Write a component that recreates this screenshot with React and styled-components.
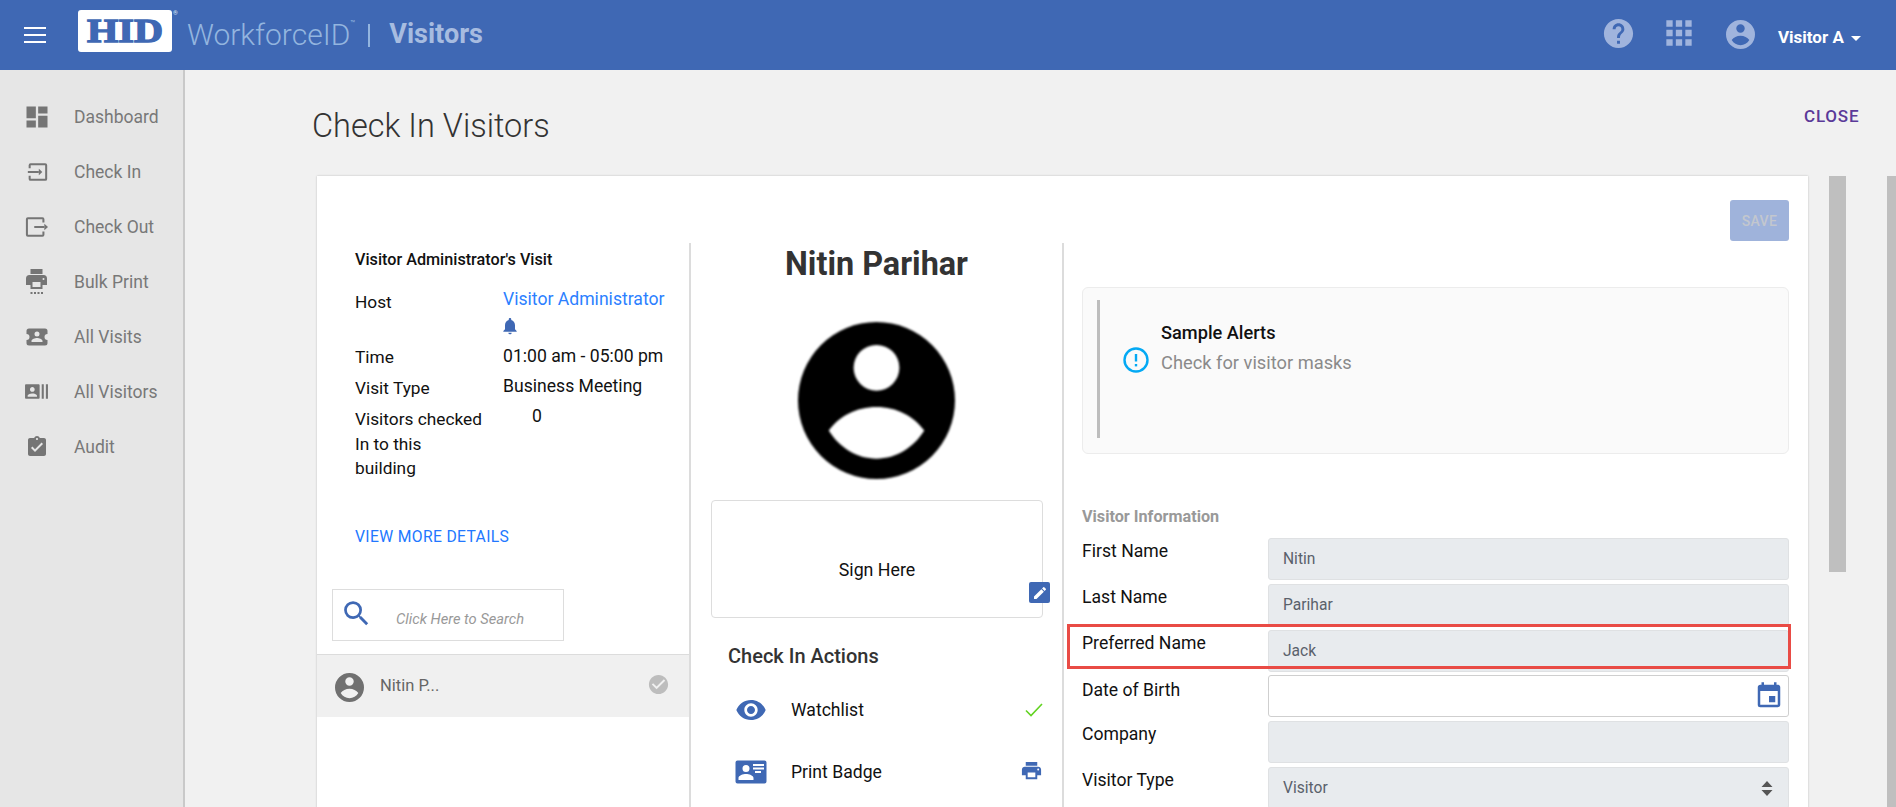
import React from "react";
import styled, { createGlobalStyle } from "styled-components";
import {
  MdDashboard, MdPrint, MdRecentActors, MdAssignmentTurnedIn, MdHelp, MdApps,
  MdVisibility, MdEvent, MdEdit, MdSearch, MdNotifications, MdCheckCircle,
} from "react-icons/md";

const Global = createGlobalStyle`
  html, body { margin: 0; padding: 0; height: 807px; overflow: hidden; background: #f1f1f1; }
  body { font-family: Roboto, "Liberation Sans", sans-serif; font-size: 17px; color: #111; }
  * { box-sizing: border-box; }
`;

const Shell = styled.div`width: 1896px; height: 807px; overflow: hidden; position: relative; background: #f1f1f1;`;

const TopBar = styled.header`height: 70px; background: #3f68b4; display: flex; align-items: center; position: relative;`;
const Burger = styled.div`width: 22px; height: 16px; margin-left: 24px; border-top: 2px solid #fff; border-bottom: 2px solid #fff; position: relative;
  &::after { content: ""; position: absolute; left: 0; right: 0; top: 5px; height: 2px; background: #fff; }`;
const LogoBox = styled.svg`margin-left: 32px; width: 102px; height: 46px; flex: none; align-self: flex-start; margin-top: 9px;`;
const Product = styled.span`margin-left: 7px; font-weight: 300; font-size: 30px; color: #93b5df; margin-top: -2px; position: relative;`;
const Tm = styled.sup`position: absolute; left: 100%; top: 3px; font-size: 8px; line-height: 1; font-weight: 400;`;
const Sep = styled.span`width: 2px; height: 23px; background: #93b5df; margin-left: 18px; margin-top: 0;`;
const AppName = styled.span`margin-left: 19px; font-weight: 700; font-size: 27px; color: #a7bce0; margin-top: -2px;`;
const TopRight = styled.div`margin-left: auto; display: flex; align-items: center; color: #a0b4dd; height: 100%; position: relative; width: 294px;`;
const TopIcon = styled.span`position: absolute; left: ${p => p.$x}px; top: ${p => p.$y}px; display: flex; line-height: 0;`;
const UserName = styled.span`position: absolute; left: 176px; top: 27px; line-height: 20px; color: #fff; font-weight: 700; font-size: 17px;`;
const Caret = styled.span`position: absolute; left: 249px; top: 36px; width: 0; height: 0; border-left: 5px solid transparent; border-right: 5px solid transparent; border-top: 5px solid #fff;`;

const Body = styled.div`display: flex; height: 737px;`;
const Sidebar = styled.nav`width: 185px; flex: none; height: 100%; background: #e6e6e6; border-right: 2px solid #c9c9c9; padding-top: 19px;`;
const NavRow = styled.div`height: 55px; display: flex; align-items: center; color: #787878; font-size: 17.5px;`;
const NavIcon = styled.span`width: 74px; flex: none; display: flex; justify-content: center; padding-right: 1px; color: #757575; line-height: 0;`;

const Main = styled.main`flex: 1; position: relative; min-width: 0;`;
const Title = styled.h1`position: absolute; left: 127px; top: 36px; margin: 0; font-weight: 300; font-size: 32.5px; line-height: 40px; color: #333;`;
const Close = styled.a`position: absolute; left: 1619px; top: 35px; line-height: 22px; font-size: 17px; font-weight: 500; color: #5b3a99; letter-spacing: .8px;`;
const ScrollThumb = styled.div`position: absolute; left: ${p => p.$x}px; width: ${p => p.$w}px; top: 106px; height: ${p => p.$h}px; background: #bfbfbf;`;

const Card = styled.section`position: absolute; left: 132px; top: 106px; width: 1491px; height: 700px; background: #fff; box-shadow: 0 0 2px rgba(0,0,0,.22);`;
const CardBar = styled.div`height: 67px; display: flex; justify-content: flex-end; padding: 24px 19px 0 0;`;
const Save = styled.button`width: 59px; height: 41px; border: 0; border-radius: 3px; background: #9fb3db; color: #c3c7ce; font: 500 14px Roboto, sans-serif; letter-spacing: .4px; padding: 0;`;
const Columns = styled.div`display: flex; height: 633px;`;

const LeftCol = styled.div`width: 374px; flex: none; border-right: 2px solid #dcdcdc;`;
const VisitInfo = styled.div`padding: 7px 0 0 38px;`;
const VisitTitle = styled.h3`margin: 0 0 17px; font-weight: 500; font-size: 16.2px; line-height: 20px; color: #111; white-space: nowrap;`;
const DetailRow = styled.div`display: grid; grid-template-columns: 148px 1fr; height: ${p => p.$h}px;`;
const DetailLabel = styled.span`font-size: 17.3px; line-height: 24.6px; margin-top: ${p => p.$t}px; width: 129px;`;
const DetailValue = styled.span`font-size: 17.6px; line-height: 24px; padding-left: ${p => p.$pad || 0}px;`;
const HostLink = styled.a`color: #2c7fff; display: block; white-space: nowrap;`;
const BellWrap = styled.span`display: block; color: #3f68b4; line-height: 0; margin: 5px 0 0 -3px;`;
const MoreLink = styled.a`display: block; margin: 45px 0 0 38px; color: #2277ff; font-size: 15.7px; line-height: 20px; letter-spacing: .35px;`;
const SearchBox = styled.div`margin: 42px 0 0 15px; width: 232px; height: 52px; border: 1.5px solid #ddd; display: flex; position: relative; color: #3f68b4;`;
const SearchIcon = styled.span`position: absolute; left: 7px; top: 7px; line-height: 0;`;
const Placeholder = styled.span`position: absolute; left: 63px; top: 17px; line-height: 24px; font-style: italic; font-size: 14.7px; color: #999;`;
const PersonRow = styled.div`margin-top: 13px; height: 63px; background: #f0f0f0; border-top: 1.5px solid #dcdcdc; display: flex; align-items: center; position: relative; color: #666;`;
const PersonAvatar = styled.span`margin-left: 18px; line-height: 0; color: #707070; margin-top: 2px;`;
const PersonName = styled.span`margin-left: 16px; font-size: 16.5px; margin-top: -2px;`;
const PersonCheck = styled.span`position: absolute; right: 19px; top: 18px; color: #bdbdbd; line-height: 0;`;

const MidCol = styled.div`width: 373px; flex: none; border-right: 2px solid #dcdcdc;`;
const Name = styled.h2`margin: 1px 0 -1px; height: 40px; text-align: center; font-weight: 700; font-size: 32.4px; line-height: 40px; color: #333;`;
const BigAvatar = styled.div`margin-top: 39px; height: 157px; display: flex; justify-content: center; filter: blur(1px); color: #000; line-height: 0; padding-right: 1px;`;
const SignBox = styled.div`margin: 21px 0 0 20px; width: 332px; height: 118px; border: 1.5px solid #ddd; border-radius: 4px; position: relative; display: flex; align-items: center; justify-content: center; font-size: 17.8px; padding-top: 20px;`;
const EditBtn = styled.span`position: absolute; right: -8px; bottom: 14px; width: 21px; height: 21px; border-radius: 2px; background: #3f68b4; color: #fff; display: flex; align-items: center; justify-content: center;`;
const ActionsTitle = styled.h3`margin: 26px 0 11px 37px; font-weight: 500; font-size: 20px; line-height: 24px; color: #333;`;
const ActionRow = styled.div`height: 62px; display: flex; align-items: center; position: relative; font-size: 17.6px;`;
const ActionIcon = styled.span`width: 100px; flex: none; display: flex; justify-content: center; padding-left: 19px; color: #3f68b4; line-height: 0;`;
const ActionEnd = styled.span`position: absolute; right: 19px; top: ${p => p.$t}px; color: ${p => p.$c}; line-height: 0;`;

const RightCol = styled.div`flex: 1; padding: 44px 0 0 18px;`;
const AlertBox = styled.div`width: 707px; height: 167px; background: #fafafa; border: 1px solid #ececec; border-radius: 6px; padding: 12px 14px; display: flex; position: relative;`;
const AlertBar = styled.span`width: 3px; height: 138px; background: #bdbdbd;`;
const AlertIcon = styled.span`position: absolute; left: 40px; top: 59px; line-height: 0;`;
const AlertText = styled.div`position: absolute; left: 78px; top: 33px;`;
const AlertTitle = styled.div`font-weight: 500; font-size: 18.2px; line-height: 24px; color: #111;`;
const AlertBody = styled.div`font-size: 18.3px; line-height: 24px; margin-top: 6px; color: #8a8a8a;`;
const SectionTitle = styled.h4`margin: 53px 0 11px; font-weight: 700; font-size: 16.2px; line-height: 20px; color: #999;`;
const Form = styled.div`position: relative; width: 707px; display: grid; grid-template-columns: 186px 521px; grid-auto-rows: 42px; row-gap: 3.8px;`;
const FieldLabel = styled.label`font-size: 17.6px; line-height: 26px; padding-top: ${p => p.$t}px; color: #111;`;
const Field = styled.div`border: 1.5px solid ${p => p.$open ? "#cfcfcf" : "#dfe1e3"}; border-radius: 3px; background: ${p => p.$open ? "#fff" : "#e8ebee"}; color: #5a616b; font-size: 15.6px; display: flex; align-items: center; padding: 0 14px; position: relative;`;
const FieldIcon = styled.span`position: absolute; right: 4px; top: 5px; color: #3f68b4; line-height: 0;`;
const SelectArrows = styled.span`position: absolute; right: 15px; top: 13px; line-height: 0; color: #555;`;
const Highlight = styled.div`position: absolute; left: -15px; top: 86px; width: 724px; height: 45px; border: 3px solid #e94b45;`;

const Account = ({ size }) => (
  <svg width={size} height={size} viewBox="0 0 24 24" fill="currentColor">
    <path fillRule="evenodd" d="M12 0a12 12 0 1 0 0 24a12 12 0 0 0 0-24zM12 3.500a3.500 3.500 0 1 1 0 7a3.500 3.500 0 0 1 0-7zM4.700 16.600C6.300 14.400 8.900 13 12 13s5.700 1.400 7.300 3.600C17.700 19.200 15 20.900 12 20.900s-5.700-1.700-7.300-4.300z" />
  </svg>
);
const CheckIn = () => (
  <svg width="22" height="22" viewBox="0 0 24 24" fill="none" stroke="currentColor" strokeWidth="2.200">
    <path d="M4 8V4.500a1 1 0 0 1 1-1h16a1 1 0 0 1 1 1v15a1 1 0 0 1-1 1H5a1 1 0 0 1-1-1V16" />
    <path d="M2 12h12" />
    <path d="M14 8.500l3.800 3.500l-3.800 3.500z" fill="currentColor" stroke="none" />
  </svg>
);
const CheckOut = () => (
  <svg width="24" height="22" viewBox="0 0 26 24" fill="none" stroke="currentColor" strokeWidth="2.200">
    <path d="M20 7V3.500a1 1 0 0 0-1-1H3a1 1 0 0 0-1 1v17a1 1 0 0 0 1 1h16a1 1 0 0 0 1-1V17" />
    <path d="M10 12h11" />
    <path d="M21 8.500l4 3.500l-4 3.500z" fill="currentColor" stroke="none" />
  </svg>
);
const BulkPrint = () => (
  <svg width="25" height="27" viewBox="0 0 25 27" fill="currentColor">
    <path d="M19.500 7h-14A3.500 3.500 0 0 0 2 10.500V17h4.500v4h12v-4H23v-6.500A3.500 3.500 0 0 0 19.500 7zM16.500 19h-8v-5h8v5zM19.500 12a1 1 0 1 1 0-2a1 1 0 0 1 0 2zM18.500 1h-12v5h12V1z" />
    <path d="M6.500 24h2v2h-2zM10 24h2v2h-2zM13.500 24h2v2h-2zM17 24h2v2h-2z" />
  </svg>
);
const Ticket = () => (
  <svg width="22" height="18" viewBox="0 0 22 18" fill="currentColor">
    <path fillRule="evenodd" d="M3 0.500h16a2.500 2.500 0 0 1 2.500 2.500v3a3 3 0 0 0 0 6v3a2.500 2.500 0 0 1-2.500 2.500H3A2.500 2.500 0 0 1 .5 15v-3a3 3 0 0 0 0-6V3A2.500 2.500 0 0 1 3 .5zM11 3.500a2.500 2.500 0 1 0 0 5a2.500 2.500 0 0 0 0-5zM5.500 14h11v-1c0-2-3.600-3-5.500-3s-5.500 1-5.500 3z" />
  </svg>
);
const HidLogo = () => (
  <LogoBox viewBox="0 0 102 46">
    <rect x="0" y="1" width="94" height="42" rx="3" fill="#fff" />
    <text x="9" y="33" fontFamily="Liberation Serif" fontWeight="700" fontSize="33" textLength="76" lengthAdjust="spacingAndGlyphs" fill="#3f68b4" stroke="#3f68b4" strokeWidth="1.300">HID</text>
    <text x="95" y="6" fontFamily="Roboto" fontSize="6" fill="#dfe7f4">®</text>
  </LogoBox>
);
const Badge = () => (
  <svg width="32" height="24" viewBox="0 0 32 24" fill="currentColor">
    <path fillRule="evenodd" d="M2.500 0.500h27a2 2 0 0 1 2 2v19a2 2 0 0 1-2 2h-27a2 2 0 0 1-2-2v-19a2 2 0 0 1 2-2zM11 5a3.500 3.500 0 1 0 0 7a3.500 3.500 0 0 0 0-7zM3.500 20h15v-2c0-2.500-4.500-4-7.500-4s-7.500 1.500-7.500 4zM18 4v2h11V4zM18 7.500v2h11v-2zM20 11v2h6v-2z" />
  </svg>
);
const GreenCheck = () => (
  <svg width="18" height="14" viewBox="0 0 18 14" fill="none" stroke="currentColor" strokeWidth="1.600">
    <path d="M1 7.500l5 5L17 1" />
  </svg>
);
const InfoIcon = () => (
  <svg width="26" height="26" viewBox="0 0 26 26" fill="none" stroke="#03a9f4">
    <circle cx="13" cy="13" r="11.500" strokeWidth="2.400" />
    <path d="M13 7v7.500" strokeWidth="2.400" />
    <path d="M13 17v2.400" strokeWidth="2.400" />
  </svg>
);
const Arrows = () => (
  <svg width="12" height="15" viewBox="0 0 12 15" fill="currentColor">
    <path d="M6 0l5.500 6H.5zM6 15L.5 9h11z" />
  </svg>
);

const nav = [
  ["Dashboard", <MdDashboard size={28} />],
  ["Check In", <CheckIn />],
  ["Check Out", <CheckOut />],
  ["Bulk Print", <BulkPrint />],
  ["All Visits", <Ticket />],
  ["All Visitors", <MdRecentActors size={25} />],
  ["Audit", <MdAssignmentTurnedIn size={24} />],
];

export default function App() {
  return (
    <Shell>
      <Global />
      <TopBar>
        <Burger />
        <HidLogo />
        <Product>WorkforceID<Tm>™</Tm></Product>
        <Sep />
        <AppName>Visitors</AppName>
        <TopRight>
          <TopIcon $x={-1} $y={16}><MdHelp size={35} /></TopIcon>
          <TopIcon $x={58} $y={14}><MdApps size={38} /></TopIcon>
          <TopIcon $x={124} $y={20}><Account size={29} /></TopIcon>
          <UserName>Visitor A</UserName>
          <Caret />
        </TopRight>
      </TopBar>
      <Body>
        <Sidebar>
          {nav.map(([label, icon]) => (
            <NavRow key={label}><NavIcon>{icon}</NavIcon>{label}</NavRow>
          ))}
        </Sidebar>
        <Main>
          <Title>Check In Visitors</Title>
          <Close>CLOSE</Close>
          <ScrollThumb $x={1644} $w={17} $h={396} />
          <ScrollThumb $x={1702} $w={9} $h={631} />
          <Card>
            <CardBar><Save>SAVE</Save></CardBar>
            <Columns>
              <LeftCol>
                <VisitInfo>
                  <VisitTitle>Visitor Administrator's Visit</VisitTitle>
                  <DetailRow $h={57}>
                    <DetailLabel $t={3}>Host</DetailLabel>
                    <DetailValue>
                      <HostLink>Visitor Administrator</HostLink>
                      <BellWrap><MdNotifications size={20} /></BellWrap>
                    </DetailValue>
                  </DetailRow>
                  <DetailRow $h={30}>
                    <DetailLabel $t={1}>Time</DetailLabel>
                    <DetailValue>01:00 am - 05:00 pm</DetailValue>
                  </DetailRow>
                  <DetailRow $h={30}>
                    <DetailLabel $t={2}>Visit Type</DetailLabel>
                    <DetailValue>Business Meeting</DetailValue>
                  </DetailRow>
                  <DetailRow $h={78}>
                    <DetailLabel $t={3}>Visitors checked In to this building</DetailLabel>
                    <DetailValue $pad={29}>0</DetailValue>
                  </DetailRow>
                </VisitInfo>
                <MoreLink>VIEW MORE DETAILS</MoreLink>
                <SearchBox>
                  <SearchIcon><MdSearch size={33} /></SearchIcon>
                  <Placeholder>Click Here to Search</Placeholder>
                </SearchBox>
                <PersonRow>
                  <PersonAvatar><Account size={29} /></PersonAvatar>
                  <PersonName>Nitin P...</PersonName>
                  <PersonCheck><MdCheckCircle size={23} /></PersonCheck>
                </PersonRow>
              </LeftCol>
              <MidCol>
                <Name>Nitin Parihar</Name>
                <BigAvatar><Account size={157} /></BigAvatar>
                <SignBox>
                  Sign Here
                  <EditBtn><MdEdit size={16} /></EditBtn>
                </SignBox>
                <ActionsTitle>Check In Actions</ActionsTitle>
                <ActionRow>
                  <ActionIcon><MdVisibility size={32} /></ActionIcon>
                  Watchlist
                  <ActionEnd $t={24} $c="#62d321"><GreenCheck /></ActionEnd>
                </ActionRow>
                <ActionRow>
                  <ActionIcon><Badge /></ActionIcon>
                  Print Badge
                  <ActionEnd $t={18} $c="#3f68b4"><MdPrint size={23} /></ActionEnd>
                </ActionRow>
              </MidCol>
              <RightCol>
                <AlertBox>
                  <AlertBar />
                  <AlertIcon><InfoIcon /></AlertIcon>
                  <AlertText>
                    <AlertTitle>Sample Alerts</AlertTitle>
                    <AlertBody>Check for visitor masks</AlertBody>
                  </AlertText>
                </AlertBox>
                <SectionTitle>Visitor Information</SectionTitle>
                <Form>
                  <FieldLabel $t={0}>First Name</FieldLabel>
                  <Field>Nitin</Field>
                  <FieldLabel $t={0}>Last Name</FieldLabel>
                  <Field>Parihar</Field>
                  <FieldLabel $t={0}>Preferred Name</FieldLabel>
                  <Field>Jack</Field>
                  <FieldLabel $t={2}>Date of Birth</FieldLabel>
                  <Field $open><FieldIcon><MdEvent size={30} /></FieldIcon></Field>
                  <FieldLabel $t={0}>Company</FieldLabel>
                  <Field />
                  <FieldLabel $t={0}>Visitor Type</FieldLabel>
                  <Field>Visitor<SelectArrows><Arrows /></SelectArrows></Field>
                  <Highlight />
                </Form>
              </RightCol>
            </Columns>
          </Card>
        </Main>
      </Body>
    </Shell>
  );
}
